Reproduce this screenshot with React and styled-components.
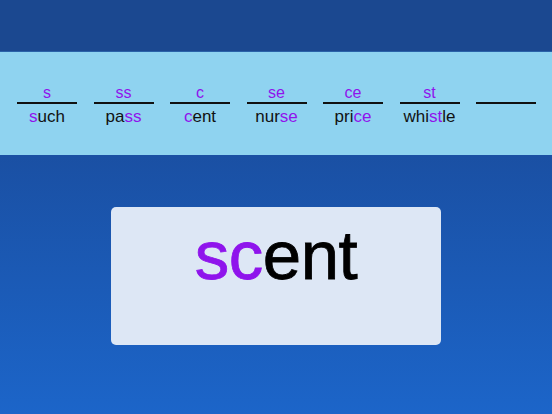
import styled, { createGlobalStyle } from 'styled-components';

const GlobalStyle = createGlobalStyle`
  html, body {
    margin: 0;
    padding: 0;
    width: 552px;
    height: 414px;
    overflow: hidden;
  }
  body {
    font-family: "Liberation Sans", Arial, sans-serif;
  }
`;

const Page = styled.div`
  width: 552px;
  height: 414px;
  display: flex;
  flex-direction: column;
  background: linear-gradient(180deg, #1b4994 0%, #1a4fa2 35%, #1c65c9 100%);
`;

const TopBar = styled.div`
  height: 52px;
  background: #1b4890;
  border-bottom: 1px solid #2a62a8;
  box-sizing: border-box;
`;

const SoundStrip = styled.div`
  height: 103px;
  background: #8fd3f0;
  display: flex;
  gap: 16.5px;
  padding: 32px 0 0 17px;
  box-sizing: border-box;
`;

const Column = styled.div`
  width: 60px;
  display: flex;
  flex-direction: column;
  align-items: center;
`;

const Label = styled.div`
  height: 18px;
  font-size: 16px;
  line-height: 18px;
  color: #8f14ec;
  text-align: center;
`;

const Rule = styled.div`
  width: 60px;
  height: 2px;
  background: #111;
  margin-bottom: 3px;
`;

const Word = styled.div`
  font-size: 17px;
  line-height: 20px;
  color: #111;
  white-space: nowrap;
`;

const Hi = styled.span`
  color: #8f14ec;
`;

const Stage = styled.div`
  flex: 1;
  display: flex;
  justify-content: center;
  padding-top: 52px;
`;

const Card = styled.div`
  width: 330px;
  height: 138px;
  background: #dde7f5;
  border-radius: 5px;
  display: flex;
  justify-content: center;
  padding-top: 9px;
  box-sizing: border-box;
`;

const BigWord = styled.div`
  font-size: 69px;
  line-height: 80px;
  color: #000;
  letter-spacing: -0.5px;
  -webkit-text-stroke: 0.8px currentColor;
`;

const rows = [
  { label: 's', parts: [['s', true], ['uch', false]] },
  { label: 'ss', parts: [['pa', false], ['ss', true]] },
  { label: 'c', parts: [['c', true], ['ent', false]] },
  { label: 'se', parts: [['nur', false], ['se', true]] },
  { label: 'ce', parts: [['pri', false], ['ce', true]] },
  { label: 'st', parts: [['whi', false], ['st', true], ['le', false]] },
  { label: '', parts: [] },
];

export default function App() {
  return (
    <>
      <GlobalStyle />
      <Page>
        <TopBar />
        <SoundStrip>
          {rows.map((r, i) => (
            <Column key={i}>
              <Label>{r.label || '\u00a0'}</Label>
              <Rule />
              <Word>
                {r.parts.map(([t, hi], j) =>
                  hi ? <Hi key={j}>{t}</Hi> : <span key={j}>{t}</span>
                )}
              </Word>
            </Column>
          ))}
        </SoundStrip>
        <Stage>
          <Card>
            <BigWord>
              <Hi>sc</Hi>ent
            </BigWord>
          </Card>
        </Stage>
      </Page>
    </>
  );
}
